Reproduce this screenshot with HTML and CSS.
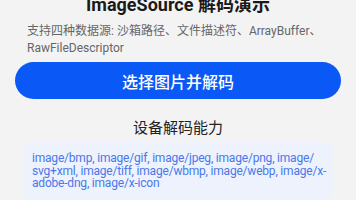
FILE: index.html
```html
<!DOCTYPE html>
<html lang="zh">
<head>
<meta charset="utf-8">
<link rel="stylesheet" href="styles.css">
</head>
<body>
<div class="page">
  <h1 class="title">ImageSource 解码演示</h1>
  <p class="subtitle">支持四种数据源: 沙箱路径、文件描述符、ArrayBuffer、RawFileDescriptor</p>
  <button class="primary">选择图片并解码</button>
  <h2 class="section">设备解码能力</h2>
  <div class="formats">image/bmp, image/gif, image/jpeg, image/png, image/<wbr>svg+xml, image/tiff, image/wbmp, image/webp, image/x-<wbr>adobe-dng, image/x-icon</div>
</div>
</body>
</html>
```

FILE: styles.css
```css
html, body {
  margin: 0;
  padding: 0;
  background: #f3f3f3;
  overflow: hidden;
}
body {
  font-family: "Roboto", "Noto Sans CJK SC", sans-serif;
}
.page {
  display: flex;
  flex-direction: column;
  padding: 0 15px;
  margin-top: -8px;
}
.title {
  margin: 0;
  font-size: 18px;
  line-height: 26px;
  font-weight: 700;
  color: #1a1a1a;
  text-align: center;
}
.subtitle {
  margin: 5px 0 0;
  padding: 0 8px 0 12px;
  font-size: 12px;
  line-height: 16.5px;
  color: #666;
}
.primary {
  margin-top: 6px;
  height: 37px;
  border: none;
  border-radius: 19px;
  background: #0a59f7;
  color: #fff;
  font-family: "Noto Sans CJK SC", sans-serif;
  font-size: 16px;
  font-weight: 500;
}
.section {
  margin: 18px 0 0;
  font-family: "Noto Sans CJK SC", sans-serif;
  font-size: 15px;
  line-height: 20px;
  font-weight: 400;
  color: #222;
  text-align: center;
}
.formats {
  margin: 5px 8px 0;
  padding: 10px 3px 10px 9px;
  border-radius: 8px;
  background: #edf2fd;
  color: #4a78ea;
  font-size: 12px;
  line-height: 12.7px;
  letter-spacing: -0.2px;
}
```
